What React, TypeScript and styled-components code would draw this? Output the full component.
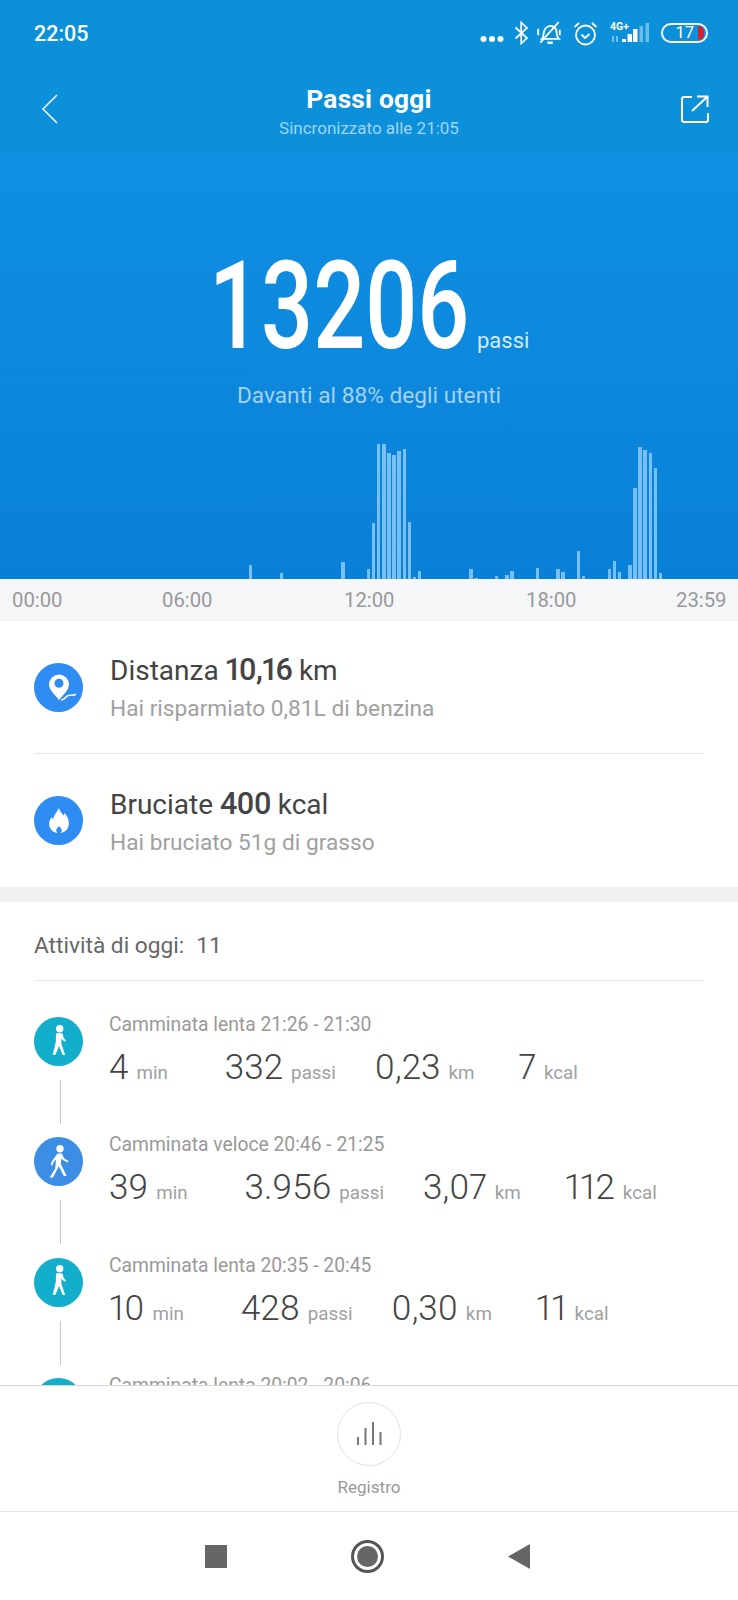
import React from 'react';
import styled, { createGlobalStyle } from 'styled-components';

const GlobalStyle = createGlobalStyle`
  html, body {
    margin: 0;
    padding: 0;
    background: #fff;
  }
  * {
    box-sizing: border-box;
  }
`;

const Screen = styled.div`
  width: 738px;
  height: 1600px;
  display: flex;
  flex-direction: column;
  overflow: hidden;
  background: #fff;
  font-family: Roboto, "Noto Sans", sans-serif;
`;

const Header = styled.header`
  flex: 0 0 152px;
  background: #0b90d9;
  color: #fff;
`;

const StatusBar = styled.div`
  height: 66px;
  padding: 0 30px 0 34px;
  display: flex;
  align-items: center;
  justify-content: space-between;
`;

const Clock = styled.span`
  font-size: 21.5px;
  font-weight: 500;
`;

const StatusIcons = styled.div`
  display: flex;
  align-items: center;
  gap: 10px;
`;

const NetworkText = styled.span`
  position: absolute;
  left: 0;
  top: 0;
  font-size: 10.5px;
  font-weight: 700;
  line-height: 10px;
`;

const Network = styled.div`
  position: relative;
  width: 41px;
  height: 22px;
`;

const Battery = styled.div`
  width: 47px;
  height: 20px;
  border: 2px solid #fff;
  border-radius: 10px;
  display: flex;
  align-items: center;
  justify-content: flex-end;
  padding-right: 2px;
  gap: 4px;
  font-size: 16.5px;
  line-height: 1;
`;

const BatteryLevel = styled.i`
  width: 6px;
  height: 14px;
  background: #d6202e;
  border-radius: 1px 7px 7px 1px;
`;

const Toolbar = styled.div`
  height: 86px;
  padding: 0 29px 0 40px;
  display: flex;
  align-items: center;
  justify-content: space-between;
`;

const TitleBlock = styled.div`
  margin: 6px 3px 0 0;
  display: flex;
  flex-direction: column;
  align-items: center;
`;

const Title = styled.h1`
  margin: 0;
  font-size: 26.3px;
  font-weight: 700;
  line-height: 32px;
  letter-spacing: 0.2px;
`;

const Subtitle = styled.div`
  font-size: 17px;
  line-height: 26px;
  color: #9fd6f5;
`;

const Hero = styled.section`
  flex: 0 0 427px;
  background: linear-gradient(#1090e2, #0980d8);
  display: flex;
  flex-direction: column;
  align-items: center;
  padding-top: 96px;
`;

const StepsRow = styled.div`
  display: flex;
  align-items: flex-end;
  width: 320px;
  height: 116px;
`;

const StepsValue = styled.div`
  flex: 0 0 266px;
  min-width: 0;
  font-size: 123px;
  font-weight: 500;
  line-height: 116px;
  color: #fff;
  transform: scaleX(0.745);
  transform-origin: left center;
  white-space: nowrap;
`;

const StepsUnit = styled.span`
  font-size: 22px;
  color: #d3ebfb;
  line-height: 32px;
  margin: 0 0 7px 2px;
`;

const Ranking = styled.div`
  margin-top: 17px;
  font-size: 22.7px;
  line-height: 30px;
  color: #a3d2f4;
`;

const Chart = styled.div`
  margin-top: auto;
  width: 100%;
  height: 135px;
  padding-left: 2px;
  display: flex;
  align-items: flex-end;
`;

const BarSlot = styled.div`
  flex: 0 0 5.125px;
  display: flex;
  justify-content: center;
  align-items: flex-end;
  height: 100%;
`;

const Bar = styled.div`
  width: 3.6px;
  background: #78c0f4;
`;

const Axis = styled.div`
  flex: 0 0 42px;
  background: #f5f6f8;
  padding-left: 12px;
  display: grid;
  grid-template-columns: 150px 182px 182px 150px 50px;
  align-items: center;
  font-size: 20.3px;
  white-space: nowrap;
  color: #999;
`;

const Summary = styled.section`
  flex: 0 0 266px;
  padding: 0 34px;
`;

const SummaryRow = styled.div<{ $divided?: boolean }>`
  height: 133px;
  display: flex;
  align-items: center;
  gap: 27px;
  border-bottom: ${(p) => (p.$divided ? '1px solid #e8e8e8' : 'none')};
`;

const RoundIcon = styled.div<{ $color: string }>`
  flex: 0 0 49px;
  width: 49px;
  height: 49px;
  border-radius: 50%;
  background: ${(p) => p.$color};
  display: flex;
  align-items: center;
  justify-content: center;
`;

const SummaryText = styled.div`
  padding-top: 2px;
`;

const SummaryTitle = styled.div`
  font-size: 28px;
  line-height: 36px;
  color: #444;
`;

const Strong = styled.b`
  font-size: 30.5px;
  font-weight: 500;
  font-feature-settings: 'pnum';
  letter-spacing: -0.8px;
`;

const SummaryNote = styled.div`
  margin-top: 5px;
  font-size: 22.7px;
  line-height: 30px;
  color: #a0a0a0;
`;

const Band = styled.div`
  flex: 0 0 15px;
  background: #eff1f3;
`;

const Activities = styled.section`
  flex: 1;
  min-height: 0;
  overflow: hidden;
  padding: 0 34px;
`;

const ActivitiesHead = styled.div`
  height: 79px;
  display: flex;
  align-items: center;
  gap: 12px;
  padding-top: 8px;
  font-size: 22.7px;
  color: #666;
  border-bottom: 1px solid #e8e8e8;
`;

const ActivityList = styled.div`
  padding-top: 31px;
`;

const ActivityRow = styled.div`
  height: 120.4px;
  display: flex;
  gap: 26px;
`;

const Timeline = styled.div`
  flex: 0 0 49px;
  display: flex;
  flex-direction: column;
  align-items: center;
  padding-top: 5px;
`;

const Connector = styled.div`
  width: 1px;
  height: 44px;
  margin: 14px 0 0 3px;
  background: #c9c9c9;
`;

const ActivityBody = styled.div`
  padding-top: 1px;
`;

const ActivityTitle = styled.div`
  font-size: 19.3px;
  line-height: 24px;
  color: #999;
`;

const Stats = styled.div`
  margin-top: 8px;
  display: flex;
  align-items: baseline;
  white-space: nowrap;
  & > :nth-child(2) {
    margin-left: 57px;
  }
  & > :nth-child(3) {
    margin-left: 39px;
  }
  & > :nth-child(4) {
    margin-left: 44px;
  }
`;

const Stat = styled.div`
  display: flex;
  align-items: baseline;
  gap: 8px;
`;

const StatValue = styled.span`
  font-size: 35px;
  font-weight: 300;
  font-feature-settings: 'pnum';
  line-height: 46px;
  color: #444;
`;

const StatUnit = styled.span`
  font-size: 18.8px;
  color: #a0a0a0;
`;

const Footer = styled.footer`
  flex: 0 0 127px;
  border-top: 1px solid #d6d6d6;
  border-bottom: 1px solid #e4e4e4;
  background: #fff;
  display: flex;
  flex-direction: column;
  align-items: center;
  padding-top: 16px;
`;

const LogButton = styled.div`
  width: 64px;
  height: 64px;
  border: 1.5px solid #e2e2e2;
  border-radius: 50%;
  display: flex;
  align-items: center;
  justify-content: center;
`;

const LogLabel = styled.div`
  margin-top: 9px;
  font-size: 17.1px;
  line-height: 24px;
  color: #999;
`;

const NavBar = styled.nav`
  flex: 0 0 88px;
  padding: 0 208px 0 205px;
  display: flex;
  align-items: center;
  justify-content: space-between;
`;

const NavSquare = styled.div`
  width: 22px;
  height: 23px;
  background: #666;
`;

const NavHome = styled.div`
  width: 33px;
  height: 33px;
  border: 3px solid #555;
  border-radius: 50%;
  padding: 3px;
  &::after {
    content: '';
    display: block;
    width: 100%;
    height: 100%;
    border-radius: 50%;
    background: #666;
  }
`;

const bins: Record<number, number> = {
  48: 14, 54: 6, 66: 17, 71: 10, 72: 56, 73: 135, 74: 135, 75: 126, 76: 124, 77: 128, 78: 130, 79: 57, 80: 2, 81: 8,
  91: 10, 92: 1, 96: 3, 98: 4, 99: 8, 104: 11, 108: 10, 109: 7, 112: 28, 113: 3, 118: 10, 119: 18, 120: 7,
  122: 14, 123: 91, 124: 132, 125: 129, 126: 126, 127: 111, 128: 6
};

const SLOW = '#12aecb';
const FAST = '#3b8ee4';

const activities = [
  { kind: 'slow', title: 'Camminata lenta 21:26 - 21:30', min: '4', steps: '332', km: '0,23', kcal: '7' },
  { kind: 'fast', title: 'Camminata veloce 20:46 - 21:25', min: '39', steps: '3.956', km: '3,07', kcal: '112' },
  { kind: 'slow', title: 'Camminata lenta 20:35 - 20:45', min: '10', steps: '428', km: '0,30', kcal: '11' },
  { kind: 'slow', title: 'Camminata lenta 20:02 - 20:06' }
];

const SlowWalker = () => (
  <svg width="22" height="44" viewBox="0 0 22 44" fill="#fff">
    <circle cx="11.700" cy="8.700" r="3.700" />
    <path d="M8 14.300c0-.6.500-1 1-1h4.500c.6 0 1 .3 1.200.8l1 4 2.300 2.200-1.200 1.500-3-2.500-.4-1.500v6l3.800 11.200h-2.700l-3.300-9-3.900 9H4.600l3.200-13z" />
  </svg>
);

const FastWalker = () => (
  <svg width="30" height="44" viewBox="0 0 30 44" fill="#fff">
    <circle cx="16" cy="8.700" r="3.700" />
    <path d="M13.500 13.500h4.200l2.500 5 4.300 2.500-1 1.500-5-2.700-1-1.500-.8 5.500 6 12.200h-2.900l-5-9.700L9 37.500H5.600l5.600-9 .8-9-2.600 3-.9 3-1.700-.6 1.200-4z" />
  </svg>
);

const App = () => (
  <Screen>
    <GlobalStyle />
    <Header>
      <StatusBar>
        <Clock>22:05</Clock>
        <StatusIcons>
          <svg width="24" height="8" viewBox="0 0 24 8" style={{ marginTop: 12, marginRight: 2 }}>
            <circle cx="3.500" cy="4" r="3" fill="#fff" />
            <circle cx="12" cy="4" r="3" fill="#fff" />
            <circle cx="20.500" cy="4" r="3" fill="#fff" />
          </svg>
          <svg width="15" height="24" viewBox="0 0 15 24" fill="none" stroke="#fff" strokeWidth="1.700" style={{ marginLeft: -2 }}>
            <path d="M1.500 6.500 13 17l-5.800 5.500V1.500L13 7 1.500 17.500" />
          </svg>
          <svg width="27" height="26" viewBox="0 0 25 24" fill="none" stroke="#fff" strokeWidth="1.700" style={{ marginLeft: -3 }}>
            <path d="M5.500 17.500c2-2 1-5 2.300-8C9 6.700 12 5 14.500 5.500c3 .6 4.500 3 4.500 6 0 2.500.8 4.500 2.200 6H5.500z" />
            <path d="M10.500 21h5" strokeWidth="2.200" />
            <path d="M4 21 21 2" />
            <path d="M2 8v6M22 9v5" />
          </svg>
          <svg width="25" height="25" viewBox="0 0 25 25" fill="none" stroke="#fff" strokeWidth="1.800" style={{ marginRight: 2 }}>
            <circle cx="12.500" cy="14" r="9.500" />
            <path d="m8.500 13.500 3.500 3.500 4.500-4" />
            <path d="M1.500 6 6 2M23.500 6 19 2" />
          </svg>
          <Network>
            <NetworkText>4G+</NetworkText>
            <svg width="41" height="22" viewBox="0 0 41 22">
              <path d="M3 14v6M7 14v6" stroke="#a9d8f3" strokeWidth="1.300" />
              <path d="M12 20v-3h4v3zM17.500 20v-8h4.500v8zM23 20V7h4.500v13z" fill="#fff" />
              <path d="M29.500 20V4h3.500v16zM35.500 20V1h3.500v19z" fill="#6dbde9" />
            </svg>
          </Network>
          <Battery>
            17
            <BatteryLevel />
          </Battery>
        </StatusIcons>
      </StatusBar>
      <Toolbar>
        <svg width="20" height="32" viewBox="0 0 20 32" fill="none" stroke="#fff" strokeWidth="1.500">
          <path d="M17 2 3 16l14 14" />
        </svg>
        <TitleBlock>
          <Title>Passi oggi</Title>
          <Subtitle>Sincronizzato alle 21:05</Subtitle>
        </TitleBlock>
        <svg width="28" height="28" viewBox="0 0 28 28" fill="none" stroke="#fff" strokeWidth="2">
          <path d="M11 2H3a2 2 0 0 0-2 2v21a2 2 0 0 0 2 2h22a2 2 0 0 0 2-2v-7" />
          <path d="M11 16 26 2M16 1.500h10.500V12" />
        </svg>
      </Toolbar>
    </Header>

    <Hero>
      <StepsRow>
        <StepsValue>13206</StepsValue>
        <StepsUnit>passi</StepsUnit>
      </StepsRow>
      <Ranking>Davanti al 88% degli utenti</Ranking>
      <Chart>
        {Array.from({ length: 144 }, (_, i) => (
          <BarSlot key={i}>
            {bins[i] ? <Bar style={{ height: bins[i] }} /> : null}
          </BarSlot>
        ))}
      </Chart>
    </Hero>

    <Axis>
      <span>00:00</span>
      <span>06:00</span>
      <span>12:00</span>
      <span>18:00</span>
      <span>23:59</span>
    </Axis>

    <Summary>
      <SummaryRow $divided>
        <RoundIcon $color="#2f8cf2">
          <svg width="40" height="32" viewBox="-4 0 40 32" fill="none" style={{ flex: 'none' }}>
            <path fillRule="evenodd" d="M16 29c-4-5-10-10-10-15.500a10 10 0 0 1 20 0C26 19 20 24 16 29zm0-12.200a4.500 4.500 0 1 0 0-9 4.500 4.500 0 0 0 0 9z" fill="#fff" />
            <path d="M18 29c2.500 0 3.500-1.200 5-3 1.400-1.700 3-1.700 4.500-1.700 2 0 3.500.2 5.500-1" stroke="#fff" strokeWidth="1.600" />
          </svg>
        </RoundIcon>
        <SummaryText>
          <SummaryTitle>Distanza <Strong>10,16</Strong> km</SummaryTitle>
          <SummaryNote>Hai risparmiato 0,81L di benzina</SummaryNote>
        </SummaryText>
      </SummaryRow>
      <SummaryRow>
        <RoundIcon $color="#2f8cf2">
          <svg width="22" height="27" viewBox="0 0 24 30" fill="none">
            <path fillRule="evenodd" d="M12 1c1 4.500 3.500 6 5 8.500.6-1 .8-1.800.8-2.800C21 9.500 23 13.500 23 18c0 6.500-5 11-11 11S1 24.500 1 18.500c0-3 1.400-5.500 3.200-7.500 0 1.200.4 2.200 1.300 3C6 9 9.500 6 12 1zm0 20c-1.500 2-3 3-3 5a3 3 0 0 0 6 0c0-2-1.500-3-3-5z" fill="#fff" />
          </svg>
        </RoundIcon>
        <SummaryText>
          <SummaryTitle>Bruciate <Strong>400</Strong> kcal</SummaryTitle>
          <SummaryNote>Hai bruciato 51g di grasso</SummaryNote>
        </SummaryText>
      </SummaryRow>
    </Summary>

    <Band />

    <Activities>
      <ActivitiesHead>
        <span>Attività di oggi:</span>
        <span>11</span>
      </ActivitiesHead>
      <ActivityList>
        {activities.map((a, i) => (
          <ActivityRow key={i}>
            <Timeline>
              <RoundIcon $color={a.kind === 'fast' ? FAST : SLOW}>
                {a.kind === 'fast' ? <FastWalker /> : <SlowWalker />}
              </RoundIcon>
              <Connector />
            </Timeline>
            <ActivityBody>
              <ActivityTitle>{a.title}</ActivityTitle>
              {a.min ? (
                <Stats>
                  <Stat><StatValue>{a.min}</StatValue><StatUnit>min</StatUnit></Stat>
                  <Stat><StatValue>{a.steps}</StatValue><StatUnit>passi</StatUnit></Stat>
                  <Stat><StatValue>{a.km}</StatValue><StatUnit>km</StatUnit></Stat>
                  <Stat><StatValue>{a.kcal}</StatValue><StatUnit>kcal</StatUnit></Stat>
                </Stats>
              ) : null}
            </ActivityBody>
          </ActivityRow>
        ))}
      </ActivityList>
    </Activities>

    <Footer>
      <LogButton>
        <svg width="26" height="24" viewBox="0 0 26 24" fill="#777">
          <rect x="1" y="15" width="2" height="8" />
          <rect x="8.500" y="6" width="2" height="17" />
          <rect x="16" y="0" width="2" height="23" />
          <rect x="23.500" y="10" width="2" height="13" />
        </svg>
      </LogButton>
      <LogLabel>Registro</LogLabel>
    </Footer>

    <NavBar>
      <NavSquare />
      <NavHome />
      <svg width="22" height="25" viewBox="0 0 22 25">
        <path d="M22 0v25L0 12.500z" fill="#666" />
      </svg>
    </NavBar>
  </Screen>
);

export default App;
